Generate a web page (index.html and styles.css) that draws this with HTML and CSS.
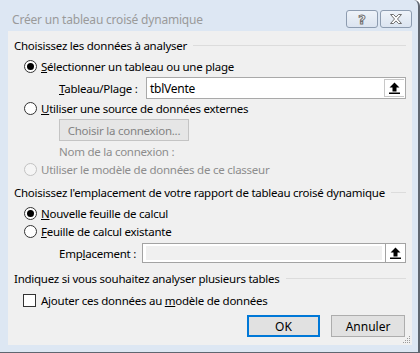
FILE: index.html
```html
<!DOCTYPE html>
<html lang="fr">
<head>
    <meta charset="UTF-8">
    <title>Créer un tableau croisé dynamique</title>
    <link rel="stylesheet" href="styles.css">
</head>
<body>
    <div class="window">
        <div class="titlebar">
            <span class="title">Créer un tableau croisé dynamique</span>
            <div class="title-buttons">
                <button class="tb-btn"><span class="help-glyph">?</span></button>
                <button class="tb-btn">
                    <svg width="14" height="10" viewBox="0 0 14 10">
                        <path d="M1.5 0.5h3l2.5 2.6 2.5-2.6h3l-4 4.5 4 4.5h-3l-2.5-2.6-2.5 2.6h-3l4-4.5z" fill="#fff" stroke="#6f6f6f" stroke-width="1" stroke-linejoin="round"/>
                    </svg>
                </button>
            </div>
        </div>

        <div class="panel">
            <div class="group-title first"><span>Choisissez les données à analyser</span></div>

            <label class="option opt-1">
                <span class="radio checked"></span>
                <span><u>S</u>électionner un tableau ou une plage</span>
            </label>

            <div class="field field-range">
                <span class="field-label" style="width: 87px"><u>T</u>ableau/Plage :</span>
                <div class="textbox">
                    <span class="textbox-value">tblVente</span>
                    <span class="ref-btn">
                        <svg width="11" height="12" viewBox="0 0 11 12">
                            <path d="M5.5 0.5l5 5h-3v4h-4v-4h-3z" fill="#000"/>
                            <rect x="0" y="10.5" width="11" height="1.5" fill="#000"/>
                        </svg>
                    </span>
                </div>
            </div>

            <label class="option opt-2">
                <span class="radio"></span>
                <span><u>U</u>tiliser une source de données externes</span>
            </label>

            <button class="connect-btn">Choisir la connexion...</button>

            <div class="conn-name">Nom de la connexion :</div>

            <label class="option opt-3 disabled">
                <span class="radio"></span>
                <span>Utiliser le modèle de données de ce classeur</span>
            </label>

            <div class="group-title second"><span>Choisissez l'emplacement de votre rapport de tableau croisé dynamique</span></div>

            <label class="option opt-4">
                <span class="radio checked"></span>
                <span><u>N</u>ouvelle feuille de calcul</span>
            </label>

            <label class="option opt-5">
                <span class="radio"></span>
                <span><u>F</u>euille de calcul existante</span>
            </label>

            <div class="field field-place">
                <span class="field-label" style="width: 83px">Emp<u>l</u>acement :</span>
                <div class="textbox inactive">
                    <span class="textbox-value"></span>
                    <span class="ref-btn">
                        <svg width="11" height="12" viewBox="0 0 11 12">
                            <path d="M5.5 0.5l5 5h-3v4h-4v-4h-3z" fill="#000"/>
                            <rect x="0" y="10.5" width="11" height="1.5" fill="#000"/>
                        </svg>
                    </span>
                </div>
            </div>

            <div class="group-title third"><span>Indiquez si vous souhaitez analyser plusieurs tables</span></div>

            <label class="option check-row">
                <span class="checkbox"></span>
                <span>Ajouter ces données au <u>m</u>odèle de données</span>
            </label>

            <div class="actions">
                <button class="btn default">OK</button>
                <button class="btn">Annuler</button>
            </div>

            <svg class="grip" width="9" height="9" viewBox="0 0 9 9">
                <rect x="7" y="1" width="1" height="1" fill="#9a9a9a"/>
                <rect x="5" y="3" width="1" height="1" fill="#9a9a9a"/>
                <rect x="7" y="3" width="1" height="1" fill="#9a9a9a"/>
                <rect x="3" y="5" width="1" height="1" fill="#9a9a9a"/>
                <rect x="5" y="5" width="1" height="1" fill="#9a9a9a"/>
                <rect x="7" y="5" width="1" height="1" fill="#9a9a9a"/>
                <rect x="1" y="7" width="1" height="1" fill="#9a9a9a"/>
                <rect x="3" y="7" width="1" height="1" fill="#9a9a9a"/>
                <rect x="5" y="7" width="1" height="1" fill="#9a9a9a"/>
                <rect x="7" y="7" width="1" height="1" fill="#9a9a9a"/>
            </svg>
        </div>
    </div>
</body>
</html>
```

FILE: styles.css
```css
* {
    box-sizing: border-box;
}
body {
    margin: 0;
    padding: 0;
    background-color: #ffffff;
    font-family: "Noto Sans", "Open Sans", Arial, sans-serif;
    font-size: 11.5px;
    letter-spacing: -0.25px;
    color: #000;
    white-space: nowrap;
}
.window {
    width: 420px;
    height: 353px;
    background-color: #dde7f3;
    border-right: 2px solid #5f6670;
    border-bottom: 1px solid #5f6670;
    border-top-right-radius: 6px;
    padding: 0 6px 7px 8px;
    display: flex;
    flex-direction: column;
}
.titlebar {
    height: 31px;
    display: flex;
    align-items: flex-start;
    justify-content: space-between;
}
.title {
    margin-top: 11px;
    margin-left: 4px;
    color: #9a9a9a;
    font-size: 12px;
    letter-spacing: -0.2px;
}
.title-buttons {
    display: flex;
    gap: 2px;
    margin-top: 10px;
}
.tb-btn {
    width: 32px;
    height: 18px;
    padding: 0;
    border: 1px solid #8d9cb0;
    border-radius: 3px;
    background: linear-gradient(#eef3f9, #dbe4f0);
    display: flex;
    align-items: center;
    justify-content: center;
}
.help-glyph {
    font-family: "DejaVu Sans", sans-serif;
    font-size: 13px;
    font-weight: bold;
    color: #fff;
    -webkit-text-stroke: 1px #6f6f6f;
    line-height: 1;
}

.panel {
    flex: 1;
    position: relative;
    background-color: #f0f0f0;
    padding: 6px 6px 0 6px;
}
.group-title {
    height: 16px;
    display: flex;
    align-items: center;
    gap: 6px;
}
.group-title::after {
    content: "";
    flex: 1;
    border-top: 1px solid #dcdcdc;
}
.group-title.second {
    margin-top: 7px;
}
.group-title.third {
    margin-top: 7px;
}

.option {
    height: 16px;
    display: flex;
    align-items: center;
    gap: 4px;
    padding-left: 10px;
}
.opt-1 {
    margin-top: 5px;
}
.opt-2 {
    margin-top: 1px;
}
.opt-3 {
    margin-top: 1px;
}
.opt-4 {
    margin-top: 5px;
}
.opt-5 {
    margin-top: 2px;
}
.option.disabled {
    color: #8d8d8d;
}
.radio {
    width: 13px;
    height: 13px;
    flex: none;
    border: 1px solid #333;
    border-radius: 50%;
    background-color: #fff;
    display: flex;
    align-items: center;
    justify-content: center;
}
.radio.checked::after {
    content: "";
    width: 7px;
    height: 7px;
    border-radius: 50%;
    background-color: #000;
}
.option.disabled .radio {
    border-color: #c2c2c2;
    background-color: #f5f5f5;
}
.checkbox {
    width: 13px;
    height: 13px;
    flex: none;
    border: 1px solid #333;
    background-color: #fff;
}
.check-row {
    margin-top: 6px;
    padding-left: 9px;
    gap: 5px;
}

.field {
    display: flex;
    align-items: center;
    padding-left: 45px;
}
.field-range {
    margin-top: 3px;
    height: 22px;
}
.field-place {
    margin-top: 4px;
    height: 20px;
}
.field-label {
    flex: none;
}
.textbox {
    flex: 1;
    height: 100%;
    display: flex;
    align-items: stretch;
    border: 1px solid #a9a9a9;
    background-color: #fff;
}
.textbox-value {
    flex: 1;
    padding-left: 3px;
    display: flex;
    align-items: center;
    font-size: 12px;
}
.textbox.inactive {
    border-color: #a3a3a3;
    padding: 2px 0 2px 3px;
}
.textbox.inactive .textbox-value {
    background-color: #f0f0f0;
}
.ref-btn {
    width: 20px;
    margin: 1px;
    border: 1px solid #c8c8c8;
    border-right-width: 0;
    background-color: #fff;
    display: flex;
    align-items: center;
    justify-content: center;
}
.textbox.inactive .ref-btn {
    margin: -2px 0 -2px 3px;
    border: 0;
    border-left: 1px solid #a3a3a3;
}

.connect-btn {
    display: block;
    margin: 3px 0 0 45px;
    width: 130px;
    height: 22px;
    padding: 0;
    font-family: inherit;
    font-size: 11.5px;
    letter-spacing: -0.25px;
    color: #838383;
    background-color: #e6e6e6;
    border: 1px solid #c4c4c4;
}
.conn-name {
    margin-top: 3px;
    height: 16px;
    line-height: 16px;
    padding-left: 45px;
    color: #8d8d8d;
}

.actions {
    display: flex;
    justify-content: flex-end;
    gap: 11px;
    margin-top: 7px;
    margin-right: 1px;
}
.btn {
    width: 74px;
    height: 22px;
    padding: 0;
    font-family: inherit;
    font-size: 12px;
    color: #000;
    background-color: #e1e1e1;
    border: 1px solid #adadad;
}
.btn.default {
    width: 73px;
    border: 2px solid #0078d7;
}
.grip {
    position: absolute;
    right: 1px;
    bottom: 1px;
}
```
